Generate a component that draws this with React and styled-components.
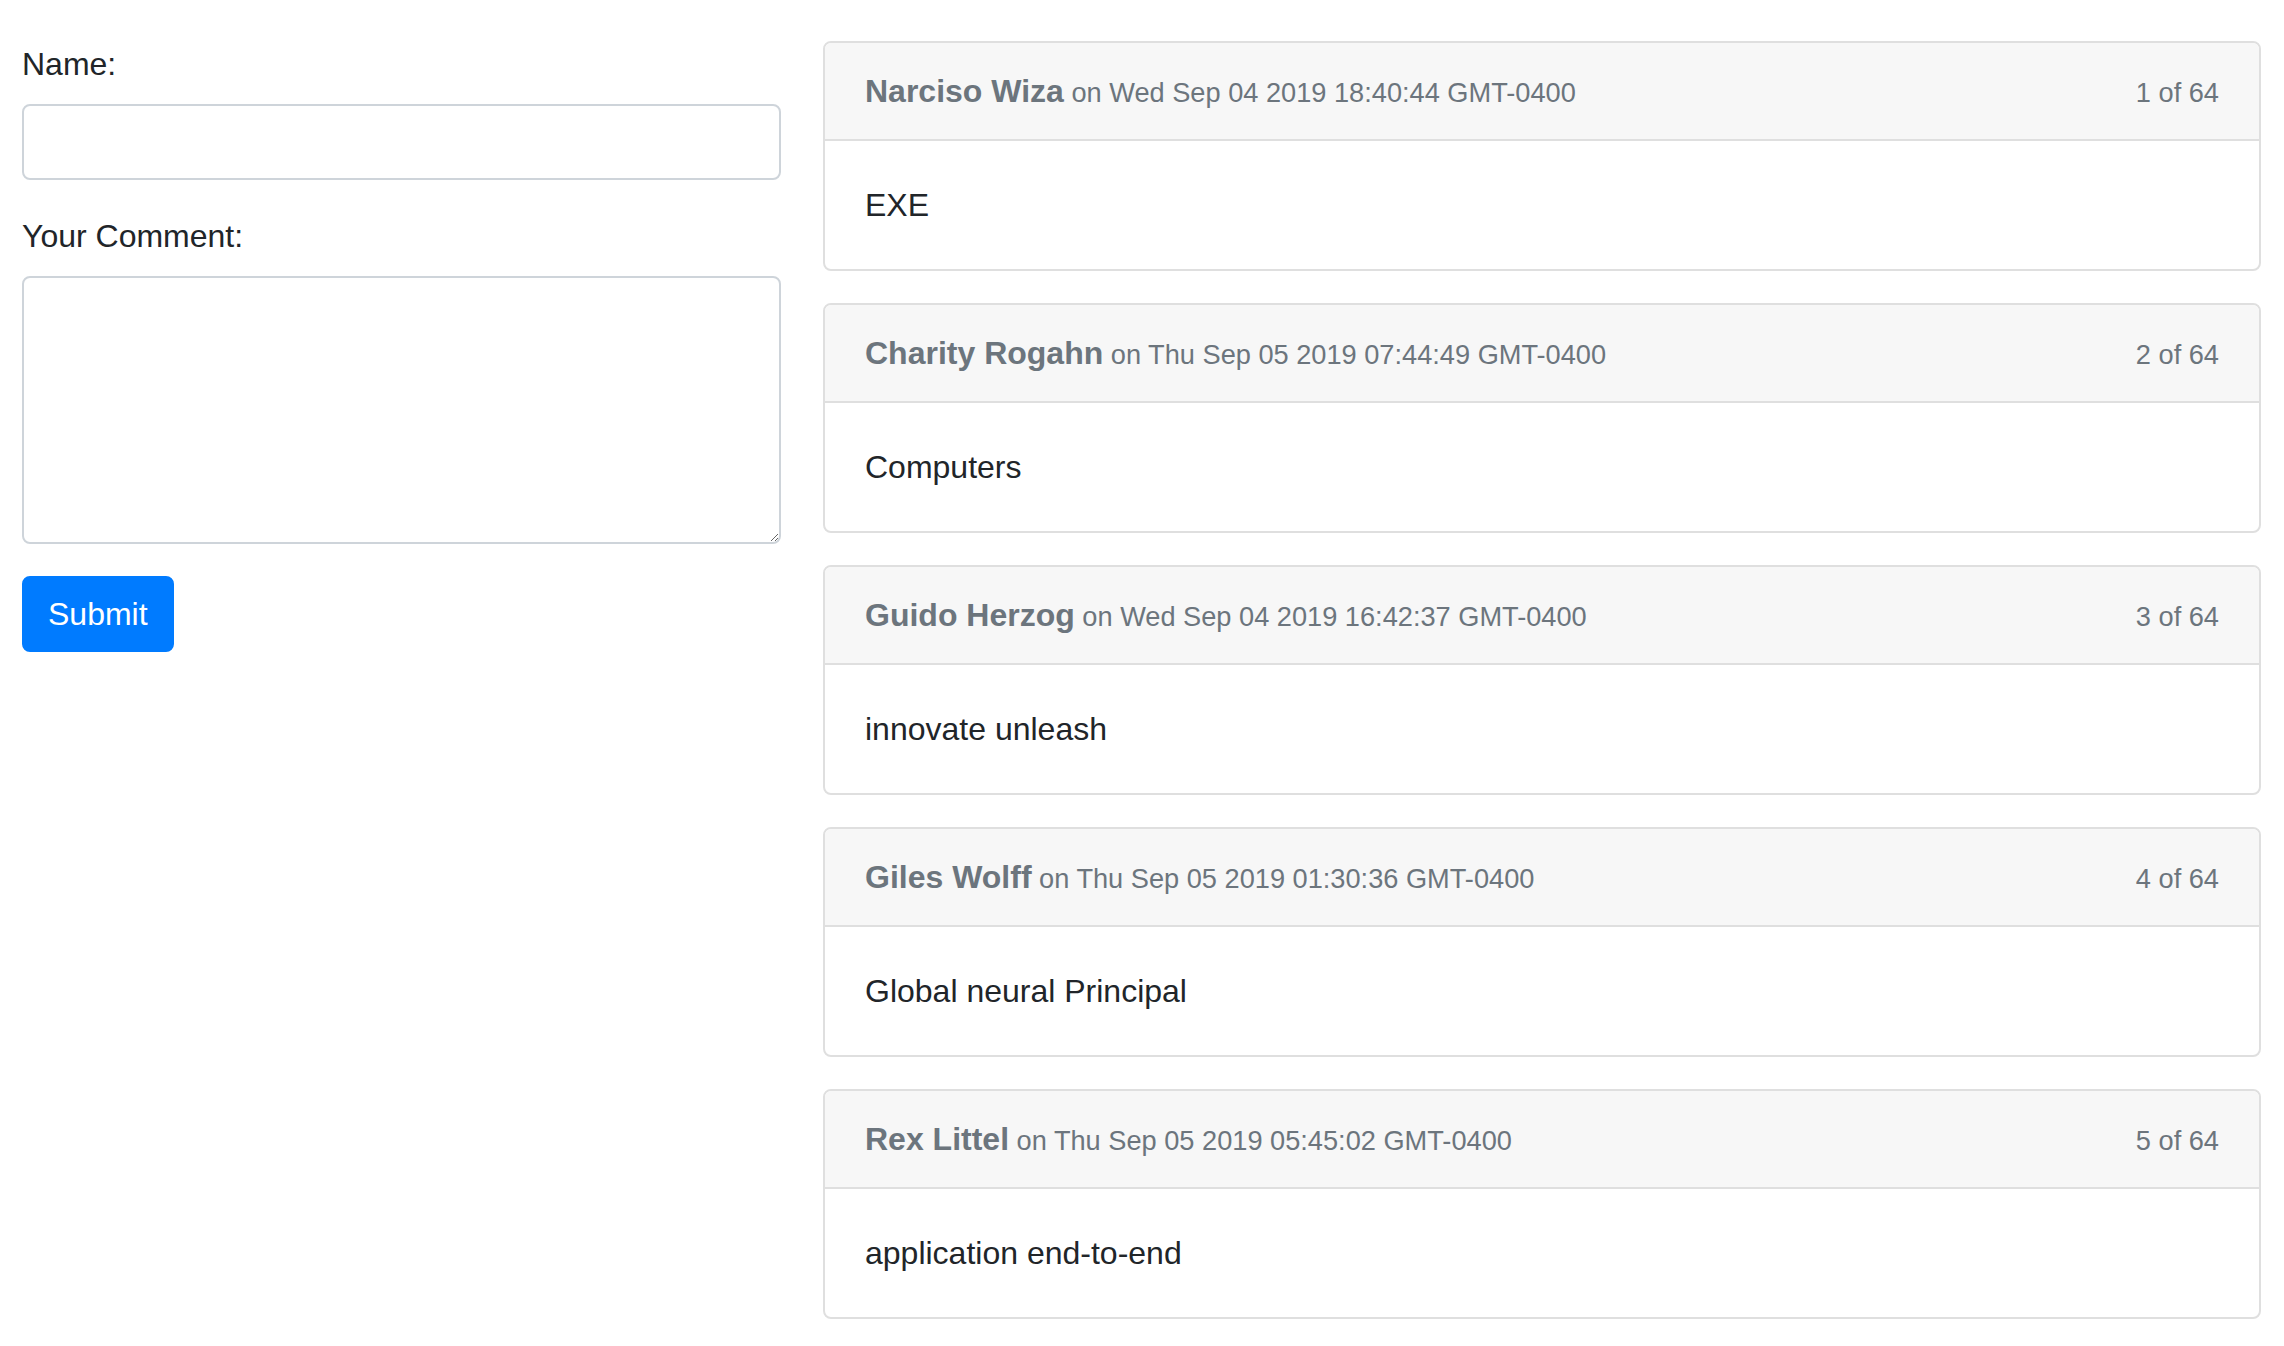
import React from "react"
import styled, { createGlobalStyle } from "styled-components"

const comments = [
  { name: "Narciso Wiza", date: "Wed Sep 04 2019 18:40:44 GMT-0400", text: "EXE" },
  { name: "Charity Rogahn", date: "Thu Sep 05 2019 07:44:49 GMT-0400", text: "Computers" },
  { name: "Guido Herzog", date: "Wed Sep 04 2019 16:42:37 GMT-0400", text: "innovate unleash" },
  { name: "Giles Wolff", date: "Thu Sep 05 2019 01:30:36 GMT-0400", text: "Global neural Principal" },
  { name: "Rex Littel", date: "Thu Sep 05 2019 05:45:02 GMT-0400", text: "application end-to-end" },
];

const total = 64;

export default function App() {
  return (
    <>
      <GlobalStyle />
      <Page>
        <Form onSubmit={(e) => e.preventDefault()}>
          <Group>
            <Label htmlFor="name">Name:</Label>
            <Input id="name" type="text" />
          </Group>
          <Group>
            <Label htmlFor="comment">Your Comment:</Label>
            <TextArea id="comment" rows={5} />
          </Group>
          <Button type="submit">Submit</Button>
        </Form>

        <CommentList>
          {comments.map((c, i) => (
            <Card key={i}>
              <CardHeader>
                <Author>
                  <strong>{c.name}</strong>
                  <small> on {c.date}</small>
                </Author>
                <Count>{i + 1} of {total}</Count>
              </CardHeader>
              <CardBody>{c.text}</CardBody>
            </Card>
          ))}
        </CommentList>
      </Page>
    </>
  );
}

const GlobalStyle = createGlobalStyle`
  html, body {
    margin: 0;
    padding: 0;
    overflow: hidden;
    background: #fff;
  }
  body {
    font-family: "Liberation Sans", Arial, sans-serif;
    font-size: 32px;
    line-height: 1.5;
    color: #212529;
  }
  * {
    box-sizing: border-box;
  }
`;

const Page = styled.div`
  display: flex;
  align-items: flex-start;
  gap: 42px;
  padding: 40px 23px 0 22px;
`;

const Form = styled.form`
  width: 759px;
  flex-shrink: 0;
`;

const Group = styled.div`
  margin-bottom: 32px;
`;

const Label = styled.label`
  display: block;
  margin-bottom: 16px;
`;

const fieldStyles = `
  display: block;
  width: 100%;
  padding: 12px 24px;
  font-family: "Liberation Sans", Arial, sans-serif;
  font-size: 32px;
  line-height: 1.5;
  color: #495057;
  background: #fff;
  border: 2px solid #ced4da;
  border-radius: 8px;
  outline: none;
  margin: 0;
`;

const Input = styled.input`
  ${fieldStyles}
  height: 76px;
`;

const TextArea = styled.textarea`
  ${fieldStyles}
  height: 268px;
  resize: vertical;
`;

const Button = styled.button`
  display: inline-block;
  padding: 12px 24px;
  font-family: "Liberation Sans", Arial, sans-serif;
  font-size: 32px;
  line-height: 1.5;
  color: #fff;
  background-color: #007bff;
  border: 2px solid #007bff;
  border-radius: 8px;
  cursor: pointer;
`;

const CommentList = styled.div`
  flex: 1;
  min-width: 0;
  margin-top: 1px;
`;

const Card = styled.div`
  background: #fff;
  border: 2px solid #dfdfdf;
  border-radius: 8px;
  margin-bottom: 32px;
  overflow: hidden;
`;

const CardHeader = styled.div`
  display: flex;
  justify-content: space-between;
  align-items: baseline;
  height: 98px;
  padding: 24px 40px;
  background-color: #f7f7f7;
  border-bottom: 2px solid #dfdfdf;
  color: #6c757d;
`;

const Author = styled.div`
  strong {
    font-weight: 700;
  }
  small {
    font-size: 27.2px;
  }
`;

const Count = styled.small`
  font-size: 27.2px;
`;

const CardBody = styled.div`
  padding: 40px;
  height: 128px;
`;
